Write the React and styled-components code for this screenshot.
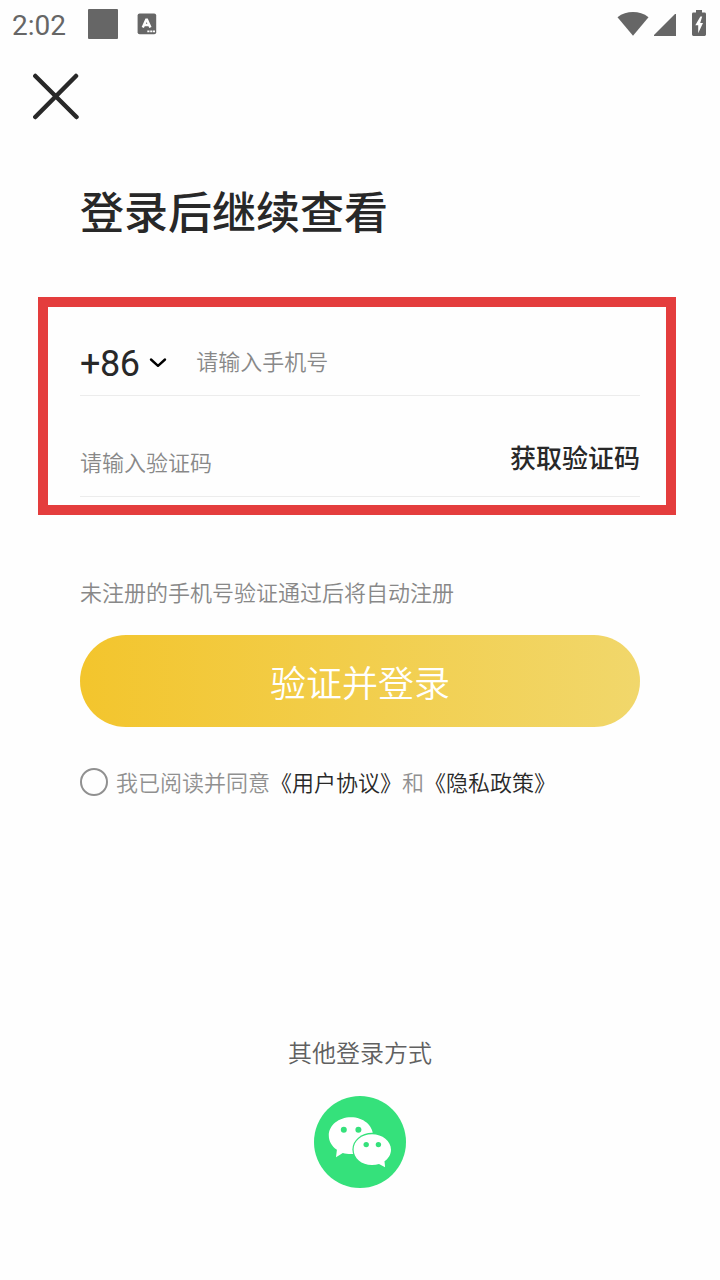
import { useState } from "react";
import styled, { createGlobalStyle } from "styled-components";

function App() {
  const [agreed, setAgreed] = useState(false);

  return (
    <>
      <GlobalStyle />
      <Screen>
        <StatusBar>
          <Clock>2:02</Clock>
          <AppSquare />
          <KeyboardIcon />
          <StatusRight>
            <WifiIcon />
            <SignalIcon />
            <BatteryIcon />
          </StatusRight>
        </StatusBar>

        <CloseBtn aria-label="close">
          <svg width="48" height="48" viewBox="0 0 48 48">
            <path
              d="M4.3 4L45.5 45M45 4L4.3 45"
              stroke="#282828"
              strokeWidth="4.5"
              strokeLinecap="round"
            />
          </svg>
        </CloseBtn>

        <Title>登录后继续查看</Title>

        <FormFrame>
          <PhoneRow>
            <CountryCode>+86</CountryCode>
            <Chevron width="20" height="12" viewBox="0 0 20 12">
              <path
                d="M3 2.5L10 8.8L17 2.5"
                fill="none"
                stroke="#000"
                strokeWidth="2.4"
                strokeLinecap="round"
                strokeLinejoin="round"
              />
            </Chevron>
            <Placeholder>请输入手机号</Placeholder>
          </PhoneRow>
          <CodeRow>
            <Placeholder>请输入验证码</Placeholder>
            <GetCodeBtn>获取验证码</GetCodeBtn>
          </CodeRow>
        </FormFrame>

        <Hint>未注册的手机号验证通过后将自动注册</Hint>
        <LoginBtn>验证并登录</LoginBtn>

        <Agreement>
          <Radio $checked={agreed} onClick={() => setAgreed(!agreed)} />
          <AgreementText>
            我已阅读并同意<Policy>《用户协议》</Policy>和
            <Policy>《隐私政策》</Policy>
          </AgreementText>
        </Agreement>

        <OtherLogin>
          <OtherTitle>其他登录方式</OtherTitle>
          <WechatIcon />
        </OtherLogin>
      </Screen>
    </>
  );
}

// icons
const KeyboardIcon = () => (
  <svg width="20" height="22" viewBox="0 0 20 22">
    <rect x="0.6" y="0.6" width="18.6" height="20.6" rx="2" fill="#666" />
    <path
      d="M5.8 14.6L9.6 6L13.4 14.6M7.4 11.9H11.8"
      fill="none"
      stroke="#fff"
      strokeWidth="2.5"
      strokeLinejoin="bevel"
    />
    <path d="M10.3 18.4H12.5M13.2 18.4H15.4M16 18.4H18" stroke="#fff" strokeWidth="1.8" />
  </svg>
);

const WifiIcon = () => (
  <svg width="32" height="24" viewBox="0 0 32 24">
    <path d="M0.5 5.2C9.5 -1.6 22.5 -1.6 31.5 5.2L16 23.8Z" fill="#666" />
  </svg>
);

const SignalIcon = () => (
  <svg width="22" height="22" viewBox="0 0 22 22">
    <path d="M21 0H22V22H0V21Z" fill="#666" />
  </svg>
);

const BatteryIcon = () => (
  <svg width="14" height="26" viewBox="0 0 14 26">
    <path
      d="M4 0H10V2.6H12.6Q14 2.6 14 4V24.6Q14 26 12.6 26H1.4Q0 26 0 24.6V4Q0 2.6 1.4 2.6H4Z"
      fill="#666"
    />
    <path d="M8.4 6.5L3.3 15.2H6.2V23.2L11 13H8.2L10.2 6.5Z" fill="#fff" />
  </svg>
);

const WechatIcon = () => (
  <svg width="92" height="92" viewBox="0 0 92 92">
    <circle cx="46" cy="46" r="46" fill="#35e17b" />
    <path
      d="M37 21.2C24.6 21.2 14.8 29.3 14.8 39.5C14.8 45.4 17.9 50.4 22.9 53.8L22 61.2L28.8 57C31.3 57.8 34 58.1 37 58.1C49.2 58.1 59 49.8 59 39.5C59 29.3 49.2 21.2 37 21.2Z"
      fill="#fff"
    />
    <ellipse cx="58" cy="53.4" rx="19.6" ry="16.6" fill="#35e17b" />
    <path
      d="M58 38.2C47.4 38.2 39.6 45 39.6 53.5C39.6 62.2 47.4 69 58 69C60.6 69 62.9 68.6 65 67.9L71.1 71.2L70.5 65.2C74.6 62.4 77 58.3 77 53.7C77 45 68.4 38.2 58 38.2Z"
      fill="#fff"
    />
    <circle cx="29.8" cy="33.8" r="3" fill="#35e17b" />
    <circle cx="44.4" cy="33.8" r="3" fill="#35e17b" />
    <circle cx="52.2" cy="48.6" r="2.7" fill="#35e17b" />
    <circle cx="64.4" cy="48.6" r="2.7" fill="#35e17b" />
  </svg>
);

const GlobalStyle = createGlobalStyle`
  body {
    margin: 0;
    background-color: #fefefe;
    font-family: Roboto, "Noto Sans CJK SC", sans-serif;
  }
  button {
    padding: 0;
    border: none;
    background: none;
    font-family: inherit;
  }
  svg {
    display: block;
    flex-shrink: 0;
  }
`;

const Screen = styled.div`
  display: flex;
  flex-direction: column;
  width: 720px;
  height: 1280px;
  overflow: hidden;
`;

// status bar
const StatusBar = styled.div`
  display: flex;
  align-items: center;
  height: 48px;
  padding: 0 14px 0 12px;
`;
const Clock = styled.span`
  width: 76px;
  padding-top: 3px;
  color: #666;
  font-size: 28px;
  line-height: 33px;
`;
const AppSquare = styled.div`
  width: 30px;
  height: 30px;
  margin-right: 19px;
  border-radius: 1px;
  background-color: #666;
`;
const StatusRight = styled.div`
  display: flex;
  align-items: flex-end;
  margin-left: auto;
  padding-bottom: 2px;

  svg:nth-child(2) {
    margin: 0 16px 0 5px;
  }
`;

const CloseBtn = styled.button`
  width: 48px;
  margin: 24px 0 0 31px;
`;

const Title = styled.h1`
  margin: 61px 0 0 80px;
  color: #282828;
  font-size: 44px;
  font-weight: 500;
  line-height: 66px;
`;

// form
const FormFrame = styled.div`
  box-sizing: border-box;
  width: 638px;
  height: 218px;
  margin: 50px 0 0 38px;
  padding: 0 26px 0 32px;
  border: 10px solid #e43d3d;
`;
const FormRow = styled.div`
  box-sizing: border-box;
  display: flex;
  align-items: center;
  border-bottom: 1px solid #ececec;
`;
const PhoneRow = styled(FormRow)`
  height: 89px;
  padding-top: 24px;
`;
const CodeRow = styled(FormRow)`
  justify-content: space-between;
  height: 101px;
  padding-top: 36px;
`;
const CountryCode = styled.span`
  padding-top: 2px;
  color: #282828;
  font-size: 36px;
  letter-spacing: -0.4px;
  line-height: 42px;
`;
const Chevron = styled.svg`
  margin: 0 28.5px 0 8px;
`;
const Placeholder = styled.span`
  color: #888;
  font-size: 22px;
  font-weight: 350;
  line-height: 32px;
`;
const GetCodeBtn = styled.button`
  margin-bottom: 10px;
  color: #282828;
  font-size: 26px;
  font-weight: 500;
  line-height: 38px;
`;

const Hint = styled.p`
  margin: 63px 0 0 80px;
  color: #888;
  font-size: 22px;
  font-weight: 350;
  line-height: 32px;
`;
const LoginBtn = styled.button`
  width: 560px;
  height: 92px;
  margin: 25px 0 0 80px;
  border-radius: 46px;
  background: linear-gradient(90deg, #f3c52d, #f1d76b);
  color: #fff;
  font-size: 36px;
  font-weight: 350;
`;

// agreement
const Agreement = styled.div`
  display: flex;
  align-items: center;
  gap: 8px;
  margin: 39px 0 0 80px;
  height: 32px;
`;
const Radio = styled.button`
  box-sizing: border-box;
  width: 28px;
  height: 28px;
  border: 2px solid #909090;
  border-radius: 50%;
  background-color: ${({ $checked }) => ($checked ? "#f3c52d" : "transparent")};
`;
const AgreementText = styled.span`
  padding-top: 4px;
  color: #909090;
  font-size: 22px;
  font-weight: 350;
  line-height: 32px;
`;
const Policy = styled.span`
  color: #282828;
`;

// other login
const OtherLogin = styled.div`
  display: flex;
  flex-direction: column;
  align-items: center;
  gap: 25px;
  margin-top: 239px;
`;
const OtherTitle = styled.span`
  color: #606060;
  font-size: 24px;
  font-weight: 350;
  line-height: 34px;
`;

export default App;
